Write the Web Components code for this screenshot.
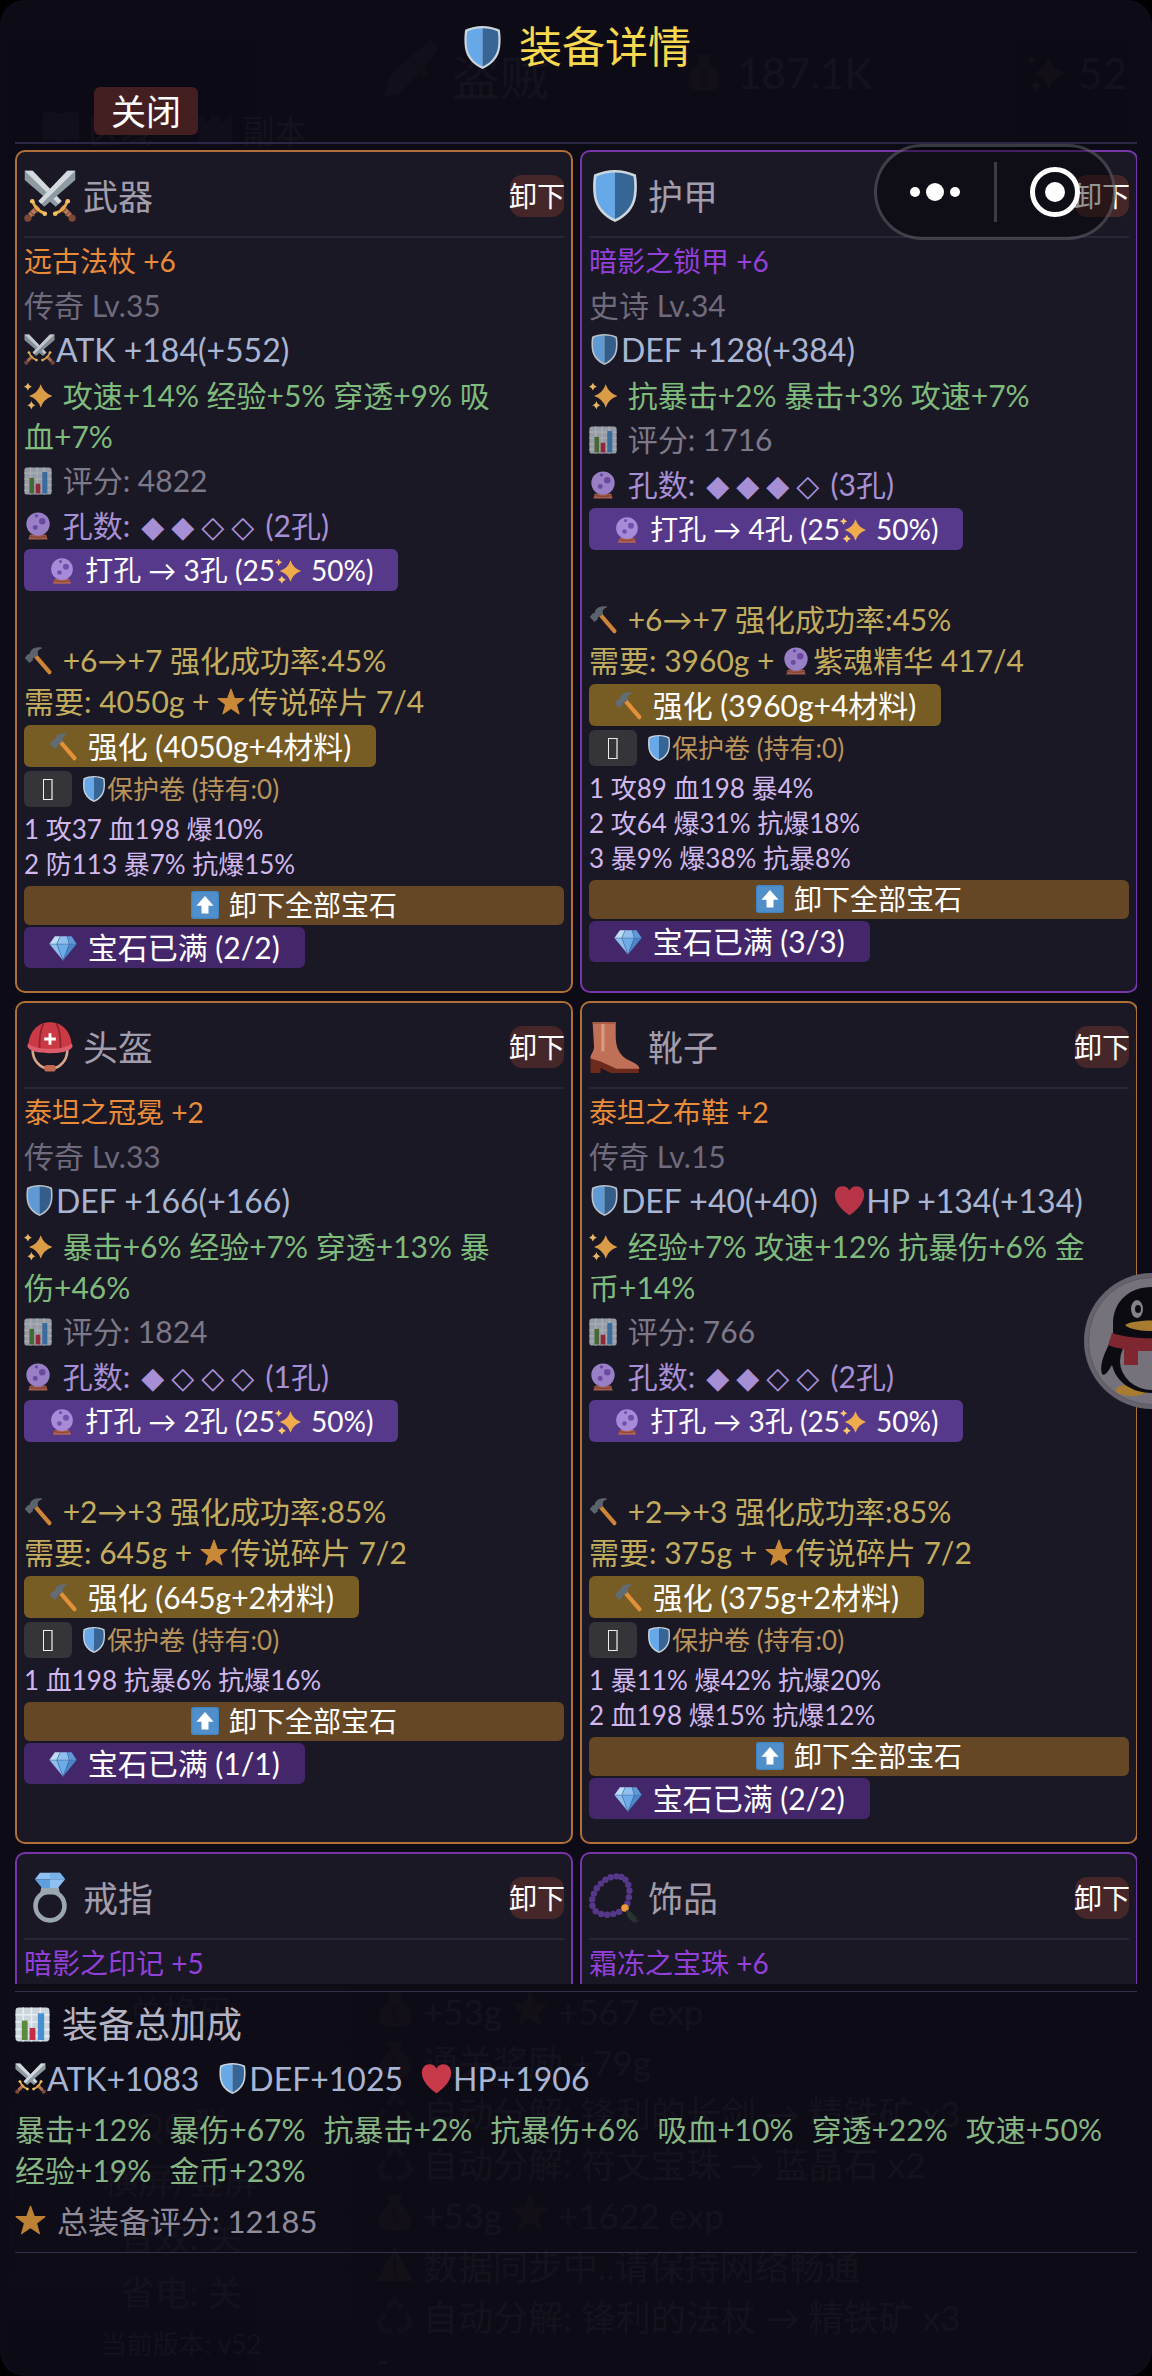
<!DOCTYPE html>
<html lang="zh-CN">
<head>
<meta charset="utf-8">
<meta name="viewport" content="width=device-width, initial-scale=1">
<title>装备详情</title>
<style>
  html { background: #000; }
  body { margin: 0; font-family: Lato, "Noto Sans CJK SC", sans-serif; font-size: 30px; color: #fff; }
  .keep { white-space: nowrap; }
</style>
</head>
<body>
<gear-screen>
  <gear-card rarity="legend" icon="swords" label="武器">
    <gear-row kind="name">远古法杖 +6</gear-row>
    <gear-row kind="level">传奇 Lv.35</gear-row>
    <gear-row kind="stat"><game-icon name="swords"></game-icon>ATK +184(+552)</gear-row>
    <gear-row kind="attr"><game-icon name="sparkles"></game-icon> 攻速+14% 经验+5% 穿透+9% 吸<span class="keep">血+7%</span></gear-row>
    <gear-row kind="score"><game-icon name="chart"></game-icon> 评分: 4822</gear-row>
    <gear-row kind="holes"><game-icon name="orb"></game-icon> 孔数: <socket-pips open="2"></socket-pips> (2孔)</gear-row>
    <gear-button kind="punch"><game-icon name="orb"></game-icon> 打孔 → 3孔 (25<game-icon name="sparkles"></game-icon> 50%)</gear-button>
    <gear-row kind="forge"><game-icon name="hammer"></game-icon> +6→+7 强化成功率:45%</gear-row>
    <gear-row kind="need">需要: 4050g + <game-icon name="star"></game-icon>传说碎片 7/4</gear-row>
    <gear-button kind="forge"><game-icon name="hammer"></game-icon> 强化 (4050g+4材料)</gear-button>
    <guard-toggle>保护卷 (持有:0)</guard-toggle>
    <gear-row kind="gem">1 攻37 血198 爆10%</gear-row>
    <gear-row kind="gem">2 防113 暴7% 抗爆15%</gear-row>
    <gear-button kind="strip"><game-icon name="up"></game-icon> 卸下全部宝石</gear-button>
    <gear-button kind="full"><game-icon name="gem"></game-icon> 宝石已满 (2/2)</gear-button>
  </gear-card>

  <gear-card rarity="epic" icon="shield" label="护甲">
    <gear-row kind="name">暗影之锁甲 +6</gear-row>
    <gear-row kind="level">史诗 Lv.34</gear-row>
    <gear-row kind="stat"><game-icon name="shield"></game-icon>DEF +128(+384)</gear-row>
    <gear-row kind="attr"><game-icon name="sparkles"></game-icon> 抗暴击+2% 暴击+3% 攻速+7%</gear-row>
    <gear-row kind="score"><game-icon name="chart"></game-icon> 评分: 1716</gear-row>
    <gear-row kind="holes"><game-icon name="orb"></game-icon> 孔数: <socket-pips open="3"></socket-pips> (3孔)</gear-row>
    <gear-button kind="punch"><game-icon name="orb"></game-icon> 打孔 → 4孔 (25<game-icon name="sparkles"></game-icon> 50%)</gear-button>
    <gear-row kind="forge"><game-icon name="hammer"></game-icon> +6→+7 强化成功率:45%</gear-row>
    <gear-row kind="need">需要: 3960g + <game-icon name="orb"></game-icon>紫魂精华 417/4</gear-row>
    <gear-button kind="forge"><game-icon name="hammer"></game-icon> 强化 (3960g+4材料)</gear-button>
    <guard-toggle>保护卷 (持有:0)</guard-toggle>
    <gear-row kind="gem">1 攻89 血198 暴4%</gear-row>
    <gear-row kind="gem">2 攻64 爆31% 抗爆18%</gear-row>
    <gear-row kind="gem">3 暴9% 爆38% 抗暴8%</gear-row>
    <gear-button kind="strip"><game-icon name="up"></game-icon> 卸下全部宝石</gear-button>
    <gear-button kind="full"><game-icon name="gem"></game-icon> 宝石已满 (3/3)</gear-button>
  </gear-card>

  <gear-card rarity="legend" icon="helmet" label="头盔">
    <gear-row kind="name">泰坦之冠冕 +2</gear-row>
    <gear-row kind="level">传奇 Lv.33</gear-row>
    <gear-row kind="stat"><game-icon name="shield"></game-icon>DEF +166(+166)</gear-row>
    <gear-row kind="attr"><game-icon name="sparkles"></game-icon> 暴击+6% 经验+7% 穿透+13% 暴<span class="keep">伤+46%</span></gear-row>
    <gear-row kind="score"><game-icon name="chart"></game-icon> 评分: 1824</gear-row>
    <gear-row kind="holes"><game-icon name="orb"></game-icon> 孔数: <socket-pips open="1"></socket-pips> (1孔)</gear-row>
    <gear-button kind="punch"><game-icon name="orb"></game-icon> 打孔 → 2孔 (25<game-icon name="sparkles"></game-icon> 50%)</gear-button>
    <gear-row kind="forge"><game-icon name="hammer"></game-icon> +2→+3 强化成功率:85%</gear-row>
    <gear-row kind="need">需要: 645g + <game-icon name="star"></game-icon>传说碎片 7/2</gear-row>
    <gear-button kind="forge"><game-icon name="hammer"></game-icon> 强化 (645g+2材料)</gear-button>
    <guard-toggle>保护卷 (持有:0)</guard-toggle>
    <gear-row kind="gem">1 血198 抗暴6% 抗爆16%</gear-row>
    <gear-button kind="strip"><game-icon name="up"></game-icon> 卸下全部宝石</gear-button>
    <gear-button kind="full"><game-icon name="gem"></game-icon> 宝石已满 (1/1)</gear-button>
  </gear-card>

  <gear-card rarity="legend" icon="boot" label="靴子">
    <gear-row kind="name">泰坦之布鞋 +2</gear-row>
    <gear-row kind="level">传奇 Lv.15</gear-row>
    <gear-row kind="stat"><game-icon name="shield"></game-icon>DEF +40(+40)&nbsp; <game-icon name="heart"></game-icon>HP +134(+134)</gear-row>
    <gear-row kind="attr"><game-icon name="sparkles"></game-icon> 经验+7% 攻速+12% 抗暴伤+6% 金<span class="keep">币+14%</span></gear-row>
    <gear-row kind="score"><game-icon name="chart"></game-icon> 评分: 766</gear-row>
    <gear-row kind="holes"><game-icon name="orb"></game-icon> 孔数: <socket-pips open="2"></socket-pips> (2孔)</gear-row>
    <gear-button kind="punch"><game-icon name="orb"></game-icon> 打孔 → 3孔 (25<game-icon name="sparkles"></game-icon> 50%)</gear-button>
    <gear-row kind="forge"><game-icon name="hammer"></game-icon> +2→+3 强化成功率:85%</gear-row>
    <gear-row kind="need">需要: 375g + <game-icon name="star"></game-icon>传说碎片 7/2</gear-row>
    <gear-button kind="forge"><game-icon name="hammer"></game-icon> 强化 (375g+2材料)</gear-button>
    <guard-toggle>保护卷 (持有:0)</guard-toggle>
    <gear-row kind="gem">1 暴11% 爆42% 抗爆20%</gear-row>
    <gear-row kind="gem">2 血198 爆15% 抗爆12%</gear-row>
    <gear-button kind="strip"><game-icon name="up"></game-icon> 卸下全部宝石</gear-button>
    <gear-button kind="full"><game-icon name="gem"></game-icon> 宝石已满 (2/2)</gear-button>
  </gear-card>

  <gear-card rarity="epic" icon="ring" label="戒指">
    <gear-row kind="name">暗影之印记 +5</gear-row>
  </gear-card>

  <gear-card rarity="epic" icon="beads" label="饰品">
    <gear-row kind="name">霜冻之宝珠 +6</gear-row>
  </gear-card>

  <gear-totals slot="totals"></gear-totals>
</gear-screen>

<script>
const star = (cx, cy, R, r, n, rot = -90) => {
  const p = [];
  for (let i = 0; i < n * 2; i++) {
    const a = (rot + i * 180 / n) * Math.PI / 180, q = i % 2 ? r : R;
    p.push((cx + q * Math.cos(a)).toFixed(2) + ',' + (cy + q * Math.sin(a)).toFixed(2));
  }
  return p.join(' ');
};
const spark = (cx, cy, R, t = 0.2) => {
  const k = R * t;
  return `M${cx} ${cy - R}Q${cx + k} ${cy - k} ${cx + R} ${cy}Q${cx + k} ${cy + k} ${cx} ${cy + R}Q${cx - k} ${cy + k} ${cx - R} ${cy}Q${cx - k} ${cy - k} ${cx} ${cy - R}z`;
};
const sword = `
  <path fill="#8f9ba3" d="M.5.5h5.500l20 21-4 4L.5 7z"/>
  <path fill="#d3dade" d="M.5.5h5.500l20 21-2 2L.5.5z"/>
  <path stroke="#b97a5c" stroke-width="3.400" d="M26 25.500l6 6"/>
  <path stroke="#8c503c" stroke-width="1" d="M26.500 29.500l3-3M28.800 31.800l3-3"/>
  <path fill="none" stroke="#e9ae4c" stroke-width="2" stroke-linecap="round" d="M30 21.500Q28 28 21.500 30"/>
  <circle cx="30.300" cy="21.600" r="1.600" fill="#f5c165"/><circle cx="21.600" cy="30.300" r="1.600" fill="#f5c165"/>
  <circle cx="33.300" cy="33.300" r="2.500" fill="#7e4837"/>`;
const bead = (() => {
  const pts = [[19,3],[15,3.6],[11.4,5.4],[8.2,8],[5.4,11.2],[3.4,15],[2.2,19],[2.4,23.4],[4.6,27.2],[8.4,29],[12.6,29.6],[16.8,29],[20.8,27.6],[26.6,21.8],[27.6,17.4],[28,13],[27.2,8.8],[25.2,5.4],[22.4,3.4],[24.9,25]];
  return pts.map(([x, y], i) => `<circle cx="${x}" cy="${y}" r="${i === 19 ? 2.6 : 2.2}" fill="${i === 19 ? '#f19a35' : '#55388a'}"/>`).join('');
})();
const ICONS = {
  shield: `<path fill="#ccd6dd" d="M18 0c5 0 10 1.200 14.500 3.200.8 5 .9 10 .2 15C31.500 26.500 26 32.500 18 36 10 32.500 4.500 26.500 3.300 18.200c-.7-5-.6-10 .2-15C8 1.200 13 0 18 0z"/><path fill="#67a9e8" d="M18 1.800v32.200C11 30.700 6.200 25.300 5.100 18c-.6-4.600-.6-9 .1-13.500C9.200 2.700 13.500 1.800 18 1.800z"/><path fill="#376595" d="M18 1.800v32.200c7-3.300 11.800-8.700 12.900-16 .6-4.600.6-9-.1-13.500C26.800 2.700 22.500 1.800 18 1.800z"/>`,
  swords: `<g>${sword}</g><g transform="translate(36 0) scale(-1 1)">${sword}</g>`,
  helmet: `<path fill="none" stroke="#d8a58b" stroke-width="1.800" d="M6 20c0 7 5 13 12 13s12-6 12-13"/><rect x="14" y="30.500" width="8" height="4.500" rx="2" fill="#bf6952"/><path fill="#c93a44" d="M18 .8C9 .8 3.500 8 3 16.500c4 4.500 26 4.500 30 0C32.500 8 27 .8 18 .8z"/><path fill="none" stroke="#92212e" stroke-width="1.200" d="M13.500 1.500Q10.500 8 10.700 19.500M22.500 1.500q3 6.500 2.800 18"/><path fill="#dd5b6b" d="M3 15.500c5 5 25 5 30 0 .8 1 .9 2.300 0 3.200C29 23.500 7 23.500 3 18.700c-.9-.9-.8-2.200 0-3.200z"/><path fill="#fff" d="M17 8.500h2V11.500h3v2h-3v3h-2v-3h-3v-2h3z"/>`,
  boot: `<path fill="#6b2a1c" d="M1 26h8l24 5.500c1 0 1.500.6 1.500 1.500v3H15l-7-3.500V36H1z"/><path fill="#bf7057" d="M2.500.8h16V10c0 6 1 10.500 5.500 15 3 2.800 10.500 4.200 11 8H19L8 28l-7-2c0-3 2.500-5 2.500-8z"/><path fill="#d99a83" d="M8.500.8h2.200V21H8.500z"/><path fill="#a9583f" d="M2.500.8h16v1.200h-16z"/>`,
  ring: `<circle cx="18" cy="23.500" r="10" fill="none" stroke="#9aa7b0" stroke-width="3.200"/><path fill="#9aa7b0" d="M12 10.500h12l1 5H11z"/><path fill="#8fc0f2" d="M11 .5h14l3.500 4.500h-21z"/><path fill="#5f9fe0" d="M7.500 5H18v6h-5.500z"/><path fill="#8fc0f2" d="M18 5h10.500l-5 6H18z"/><path fill="#6aa6e6" d="M18 .5h7l3.500 4.500H18z" opacity=".6"/>`,
  beads: `${bead}<path fill="#293330" d="M25.500 26.500c3 .2 5 1.500 6 4l2.500 1-2 .5 3.500 2.500-3.200-.7 1 2.200-3-1.800C27 33 26 30 25.500 26.500z"/>`,
  sparkles: `<path fill="#f0ab4c" d="${spark(21.5, 18, 15, 0.24)}"/><path fill="#ffc76a" d="${spark(5, 6, 5)}"/><path fill="#ffc76a" d="${spark(9.5, 30, 5.5)}"/>`,
  chart: `<rect x=".5" y=".5" width="35" height="35" rx="3.500" fill="#ccd6dd"/><path fill="none" stroke="#e8eef1" stroke-width="1.600" d="M.5 8h35M.5 15.500h35M.5 23h35M.5 30h35M8.500.5v35M17 .5v35M26 .5v35"/><path fill="#5a8a3c" d="M7 14h6v20H7z"/><path fill="#c22f44" d="M15 21.500h6V34h-6z"/><path fill="#468fd0" d="M23.500 6.500h6.500V34h-6.500z"/>`,
  orb: `<path fill="#b1624e" d="M8 29h20l2.500 6.500h-25z"/><path fill="#8b4a3c" d="M7 29.500c4 3 18 3 22 0l.8 2c-5 2.500-18 2.500-23.600 0z"/><circle cx="18" cy="15.500" r="15" fill="#a78bd8"/><circle cx="23.500" cy="12" r="4.200" fill="#7450ae"/><circle cx="14.500" cy="20" r="3.200" fill="#7450ae"/><circle cx="16" cy="5" r="2.200" fill="#7450ae"/>`,
  hammer: `<path fill="#e39139" d="M13 13.500l4-3.500 18 21c1.500 2-1.800 5.500-3.800 3.800z"/><path fill="#616c74" d="M23 .8C16-.5 11.500 1.500 8.500 5L7 9 4.500 9.500 1 14l6 6.500 4.300-3.500.2-2.500 3.500-1.500 3-3.500c-1-3.500 0-6.500 5-7.700z"/>`,
  star: `<polygon fill="#dc9639" stroke="#dc9639" stroke-width="1.500" stroke-linejoin="round" points="${star(18, 19, 17.5, 7.2, 5)}"/>`,
  up: `<rect width="36" height="36" rx="3.500" fill="#3f85c4"/><rect x="1.500" y="1.500" width="33" height="33" rx="2.500" fill="#508fca"/><path fill="#fff" d="M18 6.500l11 12.500h-6.500v10h-9V19H7z"/>`,
  gem: `<path fill="#bcdcf7" d="M7.500 3h6.800L10 13H.5z"/><path fill="#8fc0ee" d="M14.300 3h9L26 13H10z"/><path fill="#5f9bd9" d="M23.300 3h5.700l6.500 10H26z"/><path fill="#8fbdec" d="M.5 13H10l8 21z"/><path fill="#6eabe9" d="M10 13h16l-8 21z"/><path fill="#4a86c8" d="M26 13h9.500L18 34z"/><path fill="none" stroke="#3f6f9f" stroke-width=".7" d="M.5 13h35M14.300 3L10 13l8 21 8-21-2.700-10"/>`,
  heart: `<path fill="#c8394a" d="M18 35C9 29 1 20 1 11.500 1 5.500 5 1.500 10 1.500c3.500 0 6.500 1.800 8 4.800 1.500-3 4.500-4.800 8-4.800 5 0 9 4 9 10C35 20 27 29 18 35z"/>`,
  knife: `<path fill="#aab" d="M30 1l5 5-8 11-16 17-9 1 4-12z"/><path fill="#a86" d="M20 12l9 9-3 3-9-9z"/>`,
  bag: `<path fill="#da6" d="M11 1h14l-3 8c8 5 11 12 11 18 0 5-4 8-15 8S3 32 3 27c0-6 3-13 11-18z"/><path stroke="#865" stroke-width="2" fill="none" d="M22 17c-6-3-9 3-4 5s2 8-4 5M18 13v19"/>`,
  book: `<path fill="#8ac" d="M1 5c6-3 12-2 17 1 5-3 11-4 17-1v26c-6-2-12-2-17 1-5-3-11-3-17-1z"/>`,
  tower: `<path fill="#99a" d="M2 35V8h6v5h5V8h10v5h5V8h6v27z"/>`,
  recycle: `<path fill="none" stroke="#7b9" stroke-width="5" d="M11 12l7-9 7 9M29 17l4 9-7 7h-6M15 33H7l-4-8 5-8"/>`,
  warn: `<path fill="#eb5" d="M18 2l17 32H1z"/><path stroke="#333" stroke-width="3" d="M18 13v11M18 27v3"/>`
};

const define = (tag, html) => customElements.define(tag, class extends HTMLElement {
  constructor() {
    super();
    this.attachShadow({ mode: 'open' });
    if (typeof html === 'string') this.shadowRoot.innerHTML = html;
  }
  connectedCallback() {
    if (typeof html === 'function') this.shadowRoot.innerHTML = html(this);
  }
});

define('game-icon', el => `
  <style>
    :host { display: inline-block; width: var(--icon, 30px); height: var(--icon, 30px); margin-right: var(--icon-gap, 0);
      vertical-align: -3px; line-height: 0; opacity: var(--icon-dim, 1); }
    svg { display: block; width: 100%; height: 100%; }
  </style>
  <svg viewBox="0 0 36 36" aria-hidden="true">${ICONS[el.getAttribute('name')] || ''}</svg>`);

define('socket-pips', el => {
  const open = Number(el.getAttribute('open'));
  return `
  <style>
    :host { display: inline-flex; line-height: 30px; }
    span { width: 30px; text-align: center; font-family: "DejaVu Sans", sans-serif; font-size: 30px; }
  </style>${[0, 1, 2, 3].map(i => `<span>${i < open ? '◆' : '◇'}</span>`).join('')}`;
});

define('gear-row', `
  <style>
    :host { display: flow-root; font-size: 30px; line-height: 41px; color: #fff; --icon: 28px; --icon-gap: 3px; --icon-dim: .9; }
    :host([kind=name])  { font-size: 28px; line-height: 44px; color: var(--rarity-text); }
    :host([kind=level]) { line-height: 44px; color: #6f6b7c; }
    :host([kind=stat])  { font-size: 32px; line-height: 46px; color: #a9b6d3; --icon: 31px; --icon-gap: 1px; }
    :host([kind=attr])  { padding: 2px 0 1px; color: #7fbb7c; }
    :host([kind=score]) { line-height: 45px; color: #7d7989; --icon-dim: .7; }
    :host([kind=holes]) { height: 45px; line-height: 45px; color: #a78fd6; }
    :host([kind=forge]) { margin-top: 49px; color: #c2ac5d; }
    :host([kind=need])  { color: #c2ac5d; }
    :host([kind=gem])   { font-size: 26px; line-height: 35px; color: #d0b8ee; }
  </style>
  <slot></slot>`);

define('gear-button', `
  <style>
    :host { display: flex; --icon: 28px; --icon-gap: 3px; }
    button { font: 30px/42px Lato, "Noto Sans CJK SC", sans-serif; color: #fff; border: 0; border-radius: 6px;
      margin: 0; padding: 0 25px; height: 42px; white-space: nowrap; }
    :host([kind=punch]) { padding-top: 1px; --icon: 26px; }
    :host([kind=punch]) button { font-size: 28px; background: #57398c; }
    :host([kind=forge]) { margin: 3px 0 4px; }
    :host([kind=forge]) button { background: #775c24; }
    :host([kind=strip]) { margin: 4px 0 2px; }
    :host([kind=strip]) button { flex: 1; font-size: 28px; height: 39px; line-height: 39px; background: #654725; }
    :host([kind=full]) button { height: 41px; line-height: 41px; background: #44276b; }
  </style>
  <button type="button"><slot></slot></button>`);

define('guard-toggle', `
  <style>
    :host { display: block; margin-bottom: 5px; --icon: 26px; font-size: 26px; color: #b8935a; }
    label { display: flex; align-items: center; line-height: 36px; }
    input { appearance: none; display: flex; align-items: center; justify-content: center; width: 48px; height: 36px;
      margin: 0 9px 0 0; border-radius: 6px; background: #353438; }
    input::before { content: ""; box-sizing: border-box; width: 10px; height: 21px; border: 1px solid #eee; border-right: 2px solid #a5a5a7; }
  </style>
  <label><input type="checkbox"><game-icon name="shield"></game-icon><slot></slot></label>`);

define('gear-card', el => `
  <style>
    :host { display: block; box-sizing: border-box; min-height: 300px; padding: 0 7px 23px; border: 2px solid var(--rarity);
      border-radius: 10px; background: #1b1825; }
    :host([rarity=legend]) { --rarity: #b06f37; --rarity-text: #e98b38; }
    :host([rarity=epic]) { --rarity: #7636a9; --rarity-text: #9340db; }
    header { display: flex; align-items: center; gap: 7px; box-sizing: border-box; height: 86px; padding-top: 4px; margin-bottom: 1px;
      border-bottom: 2px solid #292638; --icon: 52px; }
    h2 { flex: 1; margin: 0; font-weight: 400; font-size: 35px; line-height: 46px; color: #a19dac; }
    button { display: flex; justify-content: center; width: 54px; height: 42px; padding: 0; border: 0; border-radius: 12px; background: #45272a;
      color: #fff; font: 28px/42px Lato, "Noto Sans CJK SC", sans-serif; white-space: nowrap; }
  </style>
  <header><game-icon name="${el.getAttribute('icon')}"></game-icon><h2>${el.getAttribute('label')}</h2><button type="button">卸下</button></header>
  <slot></slot>`);

define('gear-totals', `
  <style>
    :host { display: block; margin-top: 7px; padding: 9px 0 6px; border: 1px solid #35304a; border-width: 1px 0; }
    h2 { display: flex; align-items: center; gap: 12px; margin: 0; font-weight: 400; font-size: 36px; line-height: 46px; color: #b6b3c2; --icon: 35px; }
    .stats { display: flex; gap: 18px; margin-top: 7px; font-size: 32px; line-height: 50px; color: #a9b6d3; --icon: 31px; --icon-gap: 1px; }
    .attrs { display: flex; flex-wrap: wrap; gap: 0 18px; margin-top: 5px; line-height: 41px; color: #86b583; }
    .score { margin-top: 5px; font-size: 31px; line-height: 50px; color: #8f8b9b; --icon: 31px; --icon-gap: 3px; --icon-dim: .85; }
  </style>
  <h2><game-icon name="chart"></game-icon>装备总加成</h2>
  <div class="stats">
    <span><game-icon name="swords"></game-icon>ATK+1083</span><span><game-icon name="shield"></game-icon>DEF+1025</span><span><game-icon name="heart"></game-icon>HP+1906</span>
  </div>
  <div class="attrs">
    <span>暴击+12%</span><span>暴伤+67%</span><span>抗暴击+2%</span><span>抗暴伤+6%</span><span>吸血+10%</span><span>穿透+22%</span><span>攻速+50%</span><span>经验+19%</span><span>金币+23%</span>
  </div>
  <div class="score"><game-icon name="star"></game-icon> 总装备评分: 12185</div>`);

/* The game scene, almost hidden under the dark dialog. */
define('game-scene', `
  <style>
    :host { position: absolute; inset: 0; display: flex; flex-direction: column; opacity: .028; font-size: 35px; pointer-events: none; --icon: 38px; }
    .top { display: flex; align-items: center; gap: 14px; height: 60px; padding: 43px 25px 0 380px; font-size: 42px; }
    .top .job { flex: 1; font-size: 48px; --icon: 60px; }
    .top .exp { margin-left: 140px; }
    .tabs { display: flex; gap: 44px; padding: 5px 42px; font-size: 32px; line-height: 46px; }
    .mid { flex: 1; }
    .low { display: flex; gap: 24px; padding: 0 10px; }
    .menu { width: 342px; text-align: center; }
    .menu div { box-sizing: border-box; height: 53px; margin-bottom: 3px; line-height: 51px; border: 1px solid #888; border-radius: 8px; background: #ffffff22; }
    .menu p { margin: 0; font-size: 26px; line-height: 45px; }
    .log div { height: 51px; line-height: 51px; white-space: nowrap; }
    .log p { margin: 0; line-height: 33px; }
  </style>
  <div class="top"><span class="job"><game-icon name="knife"></game-icon> 盗贼</span><game-icon name="bag"></game-icon><span>187.1K</span><game-icon class="exp" name="sparkles"></game-icon><span>52</span></div>
  <div class="tabs"><span><game-icon name="book"></game-icon> 区域</span><span><game-icon name="tower"></game-icon> 副本</span></div>
  <div class="mid"></div>
  <div class="low">
    <div class="menu"><div>兑换码</div><div></div><div>QQ群</div><div>横屏/竖屏</div><div>音效: 关</div><div>省电: 关</div><p>当前版本: v52</p></div>
    <div class="log">
      <div><game-icon name="bag"></game-icon> +53g <game-icon name="star"></game-icon> +567 exp</div>
      <div><game-icon name="bag"></game-icon> 通关奖励 +79g</div>
      <div><game-icon name="recycle"></game-icon> 自动分解: 锋利的长剑 → 精铁矿 x3</div>
      <div><game-icon name="recycle"></game-icon> 自动分解: 符文宝珠 → 蓝晶石 x2</div>
      <div><game-icon name="bag"></game-icon> +53g <game-icon name="star"></game-icon> +1622 exp</div>
      <div><game-icon name="warn"></game-icon> 数据同步中..请保持网络畅通</div>
      <div><game-icon name="recycle"></game-icon> 自动分解: 锋利的法杖 → 精铁矿 x3</div>
      <p>-</p>
    </div>
  </div>`);

define('host-capsule', `
  <style>
    :host { position: absolute; top: 144px; right: 36px; box-sizing: border-box; display: flex; align-items: center; width: 242px; height: 96px;
      border: 3px solid #8a889466; border-radius: 48px; background: #0000006b; }
    button { flex: 1; display: grid; place-items: center; height: 90px; padding: 0; border: 0; background: none; }
    i { width: 3px; height: 60px; background: #3d3c44; }
  </style>
  <button type="button"><svg width="50" height="18" viewBox="0 0 50 18" fill="#fff"><circle cx="5" cy="9" r="5"/><circle cx="25" cy="9" r="9"/><circle cx="45" cy="9" r="5"/></svg></button>
  <i></i>
  <button type="button"><svg width="50" height="50" viewBox="0 0 50 50"><circle cx="25" cy="25" r="22.500" fill="none" stroke="#fff" stroke-width="5"/><circle cx="25" cy="25" r="10" fill="#fff"/></svg></button>`);

define('qq-bubble', `
  <style>
    :host { position: absolute; top: 1273px; right: 0; width: 68px; height: 136px; overflow: hidden; }
    svg { display: block; }
  </style>
  <svg width="136" height="136" viewBox="0 0 136 136" aria-hidden="true">
    <circle cx="68" cy="68" r="68" fill="#66636d"/>
    <circle cx="68" cy="68" r="63.500" fill="#75727c" stroke="#5b5862"/>
    <ellipse cx="48" cy="117" rx="16" ry="6" fill="#a87c2e"/><ellipse cx="88" cy="117" rx="16" ry="6" fill="#a87c2e"/>
    <path fill="#0c0b12" d="M28 66c-7 12-13 26-10 35 3 3 7-4 10-9 4 17 20 28 40 28s36-11 40-28V66z"/>
    <ellipse cx="68" cy="88" rx="32" ry="29" fill="#75727c"/>
    <path fill="#0c0b12" d="M68 14C44 14 29 30 29 50v17h78V50C107 30 92 14 68 14z"/>
    <ellipse cx="53" cy="36" rx="6" ry="9" fill="#85828b"/><ellipse cx="54" cy="36" rx="3" ry="4" fill="#0c0b12"/>
    <ellipse cx="75" cy="36" rx="6" ry="9" fill="#85828b"/>
    <path fill="#a87c2e" d="M41 52c8-6 46-6 54 0-8 8-46 8-54 0z"/>
    <path fill="#7e2730" d="M28 60c20 7 60 7 80 0l4 12c-20 8-32 7-44 6H54v14H40V76c-6-1-12-2-16-4z"/>
  </svg>`);

define('gear-screen', `
  <style>
    :host { position: relative; display: flex; flex-direction: column; box-sizing: border-box; height: 100vh; padding: 0 15px 123px;
      overflow: hidden; border-radius: 24px; background: #0d0b16; }
    header { position: relative; display: flex; flex-direction: column; padding: 14px 1px 7px; margin: 0 0 6px; border-bottom: 2px solid #2b2745; }
    h1 { display: flex; align-items: center; justify-content: center; gap: 15px; margin: 0; font-weight: 400; font-size: 43px; line-height: 66px; color: #f7d84e; --icon: 43px; }
    header button { align-self: flex-start; margin: 7px 0 0 78px; width: 104px; height: 48px; padding: 0; border: 0; border-radius: 6px;
      background: #431f22; color: #fff; font: 35px/48px Lato, "Noto Sans CJK SC", sans-serif; }
    main { position: relative; flex: 1; min-height: 0; overflow: hidden; }
    .grid { display: grid; grid-template-columns: repeat(2, calc(50% - 3px)); gap: 8px 7px; }
    footer { position: relative; }
  </style>
  <game-scene></game-scene>
  <header><h1><game-icon name="shield"></game-icon>装备详情</h1><button type="button">关闭</button></header>
  <main><div class="grid"><slot></slot></div></main>
  <footer><slot name="totals"></slot></footer>
  <host-capsule></host-capsule>
  <qq-bubble></qq-bubble>`);
</script>
</body>
</html>
